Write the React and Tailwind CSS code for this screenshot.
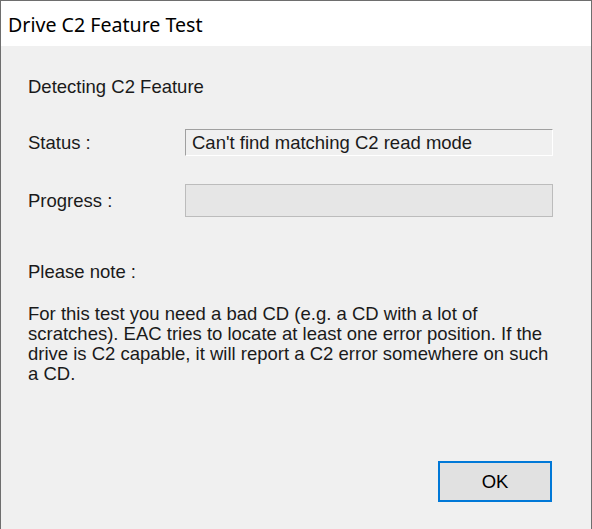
export default function App() {
  return (
    <div className="w-[592px] h-[529px] flex flex-col bg-[#f0f0f0] border-l border-t border-r border-[#6e6e6e] overflow-hidden">
      <div className="h-[45px] shrink-0 bg-white flex items-center pl-[7px] pt-[3px]">
        <span className="text-[19.6px] text-black" style={{ fontFamily: '"Noto Sans", "Open Sans", sans-serif' }}>Drive C2 Feature Test</span>
      </div>
      <div className="flex-1 flex flex-col pl-[27px] pr-[38px] text-[18.5px] leading-[20px] text-[#1a1a1a]" style={{ fontFamily: '"Liberation Sans", Arial, sans-serif' }}>
        <div className="mt-[31px] h-[20px]">Detecting C2 Feature</div>
        <div className="mt-[32px] flex items-center">
          <div className="w-[157px]">Status :</div>
          <div className="flex-1 h-[27px] bg-[#f0f0f0] border-t border-l border-[#a0a0a0] border-b border-r border-b-white border-r-white flex items-center pl-[6px]">
            Can't find matching C2 read mode
          </div>
        </div>
        <div className="mt-[28px] flex items-center">
          <div className="w-[157px]">Progress :</div>
          <div className="flex-1 h-[33px] bg-[#e6e6e6] border border-[#bcbcbc]"></div>
        </div>
        <div className="mt-[45px] h-[20px]">Please note :</div>
        <div className="mt-[22px] w-[540px] whitespace-nowrap">
          For this test you need a bad CD (e.g. a CD with a lot of<br />
          scratches). EAC tries to locate at least one error position. If the<br />
          drive is C2 capable, it will report a C2 error somewhere on such<br />
          a CD.
        </div>
        <div className="mt-[77px] flex justify-end">
          <button className="w-[114px] h-[41px] mr-[1px] bg-[#e1e1e1] border-2 border-[#0078d7] text-[18.5px] text-black">OK</button>
        </div>
      </div>
    </div>
  );
}
